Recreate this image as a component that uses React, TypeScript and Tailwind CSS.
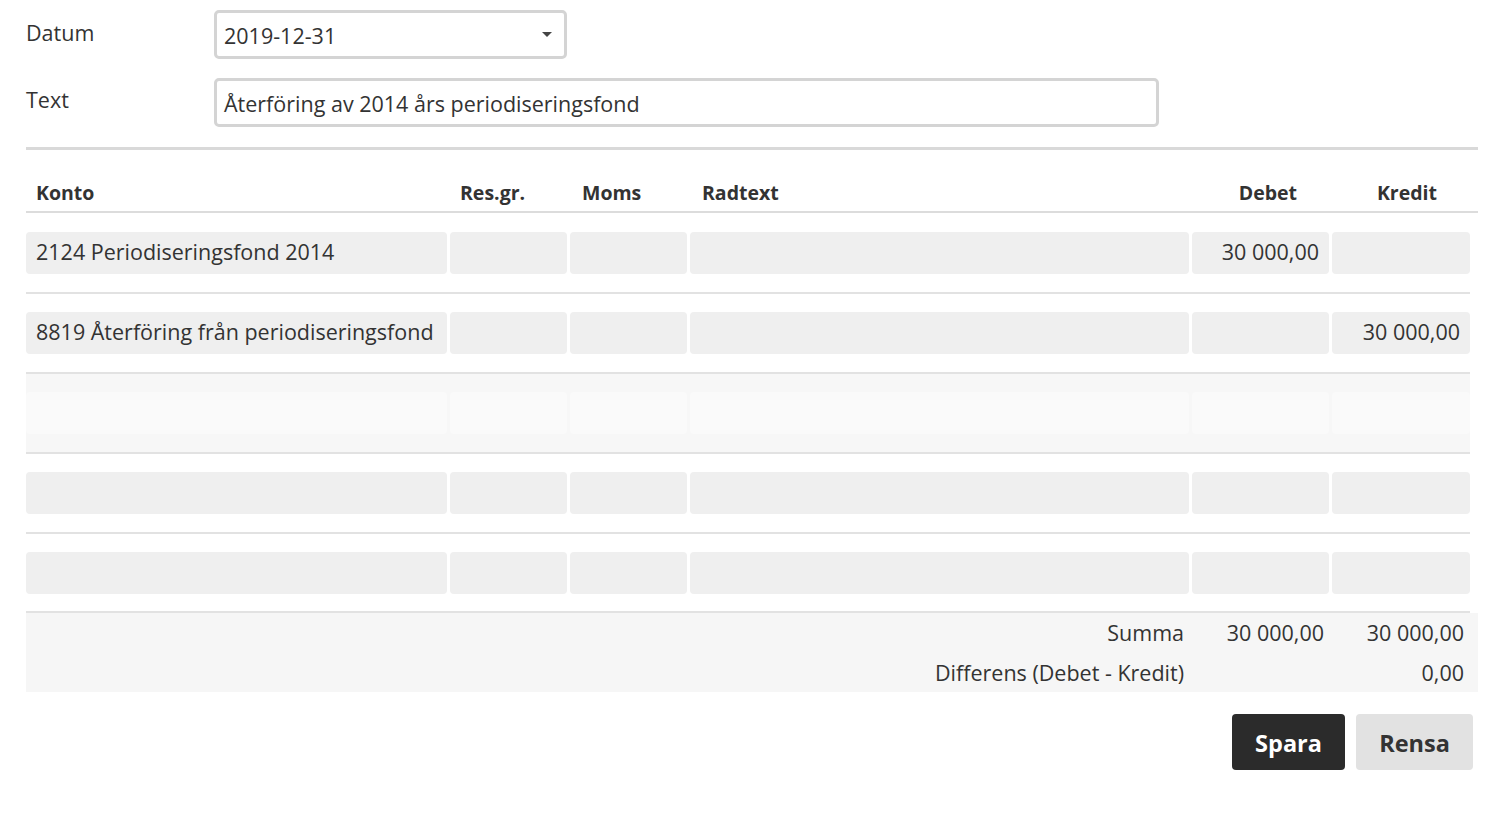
import React from 'react';

type Row = {
  konto: string;
  debet: string;
  kredit: string;
  hover?: boolean;
};

const rows: Row[] = [
  { konto: '2124 Periodiseringsfond 2014', debet: '30 000,00', kredit: '' },
  { konto: '8819 Återföring från periodiseringsfond', debet: '', kredit: '30 000,00' },
  { konto: '', debet: '', kredit: '', hover: true },
  { konto: '', debet: '', kredit: '' },
  { konto: '', debet: '', kredit: '' },
];

const cols = 'grid grid-cols-[421px_117px_117px_499px_137px_138px] gap-x-[3px]';

function Cell({ children, right, light }: { children?: React.ReactNode; right?: boolean; light?: boolean }) {
  return (
    <div
      className={`h-[42px] rounded-[4px] flex items-center px-[10px] pb-[2px] text-[21.5px] text-[#333] whitespace-nowrap ${
        light ? 'bg-[#fafafa]' : 'bg-[#efefef]'
      } ${right ? 'justify-end' : ''}`}
    >
      {children}
    </div>
  );
}

export default function App() {
  return (
    <div
      className="w-[1504px] h-[818px] bg-white text-[#333] px-[26px] pt-[10px]"
      style={{ fontFamily: '"Open Sans", "Noto Sans", sans-serif' }}
    >
      {/* header fields */}
      <div className="flex items-start">
        <div className="w-[188px] text-[21.5px] pt-[8px] leading-[30px]">Datum</div>
        <div className="w-[353px] h-[49px] border-[3px] border-[#d4d4d4] rounded-[5px] flex items-center justify-between pl-[7px] pr-[12px] text-[21.5px]">
          <span className="pt-[3px]">2019-12-31</span>
          <svg width="10" height="6" viewBox="0 0 10 6">
            <path d="M0 0 L10 0 L5 5 Z" fill="#444" />
          </svg>
        </div>
      </div>
      <div className="flex items-start mt-[19px]">
        <div className="w-[188px] text-[21.5px] pt-[7px] leading-[30px]">Text</div>
        <div className="w-[945px] h-[49px] border-[3px] border-[#d4d4d4] rounded-[5px] flex items-center pl-[7px] pt-[3px] text-[21.5px]">
          Återföring av 2014 års periodiseringsfond
        </div>
      </div>

      <div className="mt-[20px] border-t-[3px] border-[#d9d9d9]" />

      {/* table header */}
      <div className="border-b-2 border-[#dcdcdc] h-[63px] flex items-end pb-[4px]">
        <div className={`${cols} w-full text-[19.5px] font-bold text-[#333]`}>
          <div className="pl-[10px]">Konto</div>
          <div className="pl-[10px]">Res.gr.</div>
          <div className="pl-[12px]">Moms</div>
          <div className="pl-[12px]">Radtext</div>
          <div className="text-right pr-[32px]">Debet</div>
          <div className="text-right pr-[33px]">Kredit</div>
        </div>
      </div>

      {/* rows */}
      <div className="w-[1444px] pt-[1px]">
        {rows.map((r, i) => (
          <div
            key={i}
            className={`py-[18px] ${i < rows.length - 1 ? 'border-b-2 border-[#e2e2e2]' : ''} ${
              r.hover ? 'bg-[#f7f7f7]' : ''
            } ${i === rows.length - 1 ? 'pb-[17px]' : ''}`}
          >
            <div className={cols}>
              <Cell light={r.hover}>{r.konto}</Cell>
              <Cell light={r.hover} />
              <Cell light={r.hover} />
              <Cell light={r.hover} />
              <Cell light={r.hover} right>
                {r.debet}
              </Cell>
              <Cell light={r.hover} right>
                {r.kredit}
              </Cell>
            </div>
          </div>
        ))}
        <div className="border-b-2 border-[#e2e2e2]" />
      </div>

      {/* summary */}
      <div className="bg-[#f6f6f6] h-[79px] text-[21.5px] text-[#333] overflow-hidden">
        <div className={`${cols} h-[41px] items-center`}>
          <div />
          <div />
          <div />
          <div className="text-right pr-[5px]">Summa</div>
          <div className="text-right pr-[5px]">30 000,00</div>
          <div className="text-right pr-[6px]">30 000,00</div>
        </div>
        <div className={`${cols} h-[39px] items-center`}>
          <div />
          <div />
          <div />
          <div className="text-right pr-[5px] whitespace-nowrap">Differens (Debet - Kredit)</div>
          <div />
          <div className="text-right pr-[6px]">0,00</div>
        </div>
      </div>

      {/* buttons */}
      <div className="flex justify-end gap-[11px] mt-[22px] pr-[5px]">
        <button className="w-[113px] h-[56px] rounded-[4px] bg-[#2b2b2b] text-white text-[23.5px] font-bold pt-[3px]">
          Spara
        </button>
        <button className="w-[117px] h-[56px] rounded-[4px] bg-[#e2e2e2] text-[#333] text-[23.5px] font-bold pt-[3px]">
          Rensa
        </button>
      </div>
    </div>
  );
}
